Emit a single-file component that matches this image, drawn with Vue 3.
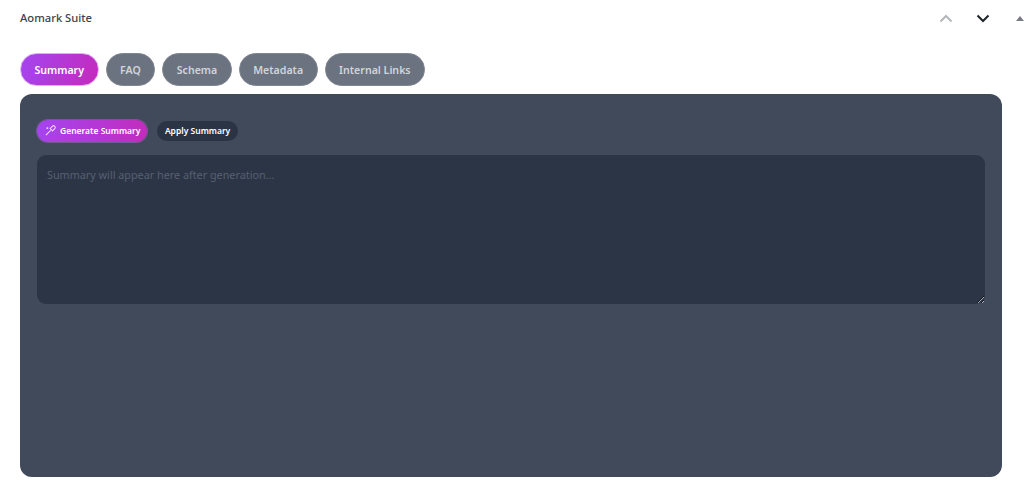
<template>
  <div class="meta-box">
    <header class="box-header">
      <h2>Aomark Suite</h2>
      <div class="handle-actions">
        <svg class="chev up" width="14" height="9" viewBox="0 0 14 9"><path d="M1.5 7.5 7 2l5.5 5.5" /></svg>
        <svg class="chev down" width="14" height="9" viewBox="0 0 14 9"><path d="M1.5 1.5 7 7l5.5-5.5" /></svg>
        <span class="toggle"></span>
      </div>
    </header>

    <nav class="tabs">
      <button
        v-for="tab in tabs"
        :key="tab"
        class="tab"
        :class="{ active: tab === activeTab }"
        @click="activeTab = tab"
      >
        {{ tab }}
      </button>
    </nav>

    <section class="panel">
      <div class="actions">
        <button class="btn generate">
          <svg width="11" height="11" viewBox="0 0 12 12">
            <path d="M1 11 6.2 5.8" />
            <path d="M5.6 3.8 8.2 6.4 10.6 4a1.8 1.8 0 0 0-2.6-2.6z" />
            <path d="M2.6 2.4v2M1.6 3.4h2" />
          </svg>
          Generate Summary
        </button>
        <button class="btn apply">Apply Summary</button>
      </div>
      <textarea class="output" placeholder="Summary will appear here after generation..."></textarea>
    </section>
  </div>
</template>

<script setup>
import { ref } from 'vue';

const tabs = ['Summary', 'FAQ', 'Schema', 'Metadata', 'Internal Links'];
const activeTab = ref('Summary');
</script>

<style>
body {
  background: #fff;
}
</style>

<style scoped>
.meta-box {
  width: 1024px;
  height: 493px;
  box-sizing: border-box;
  padding: 0 22px 16px 20px;
  display: flex;
  flex-direction: column;
  overflow: hidden;
  font-family: 'Noto Sans', 'Liberation Sans', sans-serif;
}

.box-header {
  height: 35px;
  display: flex;
  align-items: center;
  justify-content: space-between;
  margin-right: -22px;
}

.box-header h2 {
  margin: 0;
  font-size: 11.2px;
  font-weight: 500;
  color: #3c434a;
}

.handle-actions {
  display: flex;
  align-items: center;
  padding-top: 1px;
}

.chev {
  fill: none;
  stroke-width: 2;
}

.chev.up {
  stroke: #b4b7ba;
  margin-right: 23px;
}

.chev.down {
  stroke: #1d2327;
  margin-right: 26px;
}

.toggle {
  width: 0;
  height: 0;
  border-left: 4px solid transparent;
  border-right: 4px solid transparent;
  border-bottom: 5px solid #787c82;
}

.tabs {
  display: flex;
  gap: 7px;
  margin-top: 18px;
}

.tab {
  height: 33px;
  padding: 0 13.5px;
  border: 1px solid #80858f;
  border-radius: 17px;
  background: #6b7280;
  color: #d1d5db;
  font-family: inherit;
  font-size: 10.6px;
  font-weight: 600;
}

.tab.active {
  border-color: #dcaef2;
  background: linear-gradient(110deg, #a445f0, #c42bbb);
  color: #fff;
}

.panel {
  flex: 1;
  margin-top: 8px;
  padding: 26px 17px 0 17px;
  border-radius: 12px;
  background: #414a5a;
}

.actions {
  display: flex;
  gap: 10px;
  align-items: center;
}

.btn {
  height: 22px;
  border: 0;
  border-radius: 11px;
  font-family: inherit;
  font-size: 8.5px;
  font-weight: 600;
  color: #fff;
  display: flex;
  align-items: center;
  padding-bottom: 1px;
}

.generate {
  gap: 4px;
  padding: 0 7px 1px 8px;
  background: linear-gradient(110deg, #a445f0, #c42bbb);
  box-shadow: 0 0 0 1px rgba(200, 120, 240, 0.35);
}

.generate svg path {
  fill: none;
  stroke: #f0d6fb;
  stroke-width: 1.2;
}

.apply {
  height: 20px;
  padding: 0 7.5px 1px;
  background: #2b3444;
}

.output {
  display: block;
  width: 100%;
  height: 149px;
  box-sizing: border-box;
  margin-top: 13px;
  padding: 12px 10px;
  border: 0;
  border-radius: 9px;
  background: #2c3545;
  font-family: inherit;
  font-size: 10.8px;
  color: #fff;
  outline: none;
}

.output::placeholder {
  color: #566072;
  opacity: 1;
}
</style>
